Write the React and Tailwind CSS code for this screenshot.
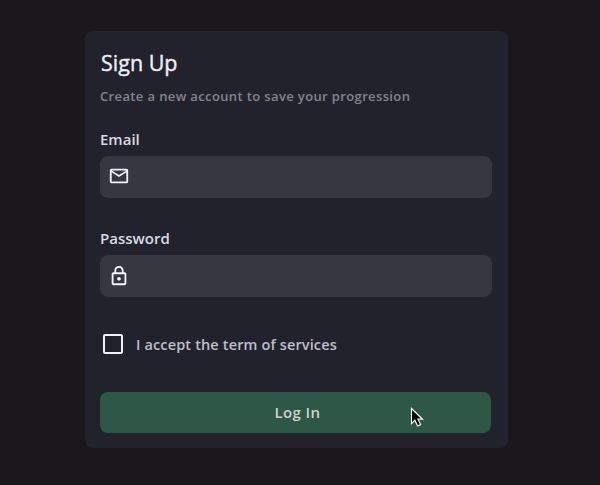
function MailIcon() {
  return (
    <svg className="mb-[2px] h-[22px] w-[22px]" viewBox="0 0 24 24" fill="currentColor">
      <path d="M22 6c0-1.1-.9-2-2-2H4c-1.1 0-2 .9-2 2v12c0 1.1.9 2 2 2h16c1.1 0 2-.9 2-2V6zm-2 0-8 5-8-5h16zm0 12H4V8l8 5 8-5v10z" />
    </svg>
  );
}

function LockIcon() {
  return (
    <svg className="h-[22px] w-[22px]" viewBox="0 0 24 24" fill="currentColor">
      <path d="M12 17c1.1 0 2-.9 2-2s-.9-2-2-2-2 .9-2 2 .9 2 2 2zm6-9h-1V6c0-2.76-2.24-5-5-5S7 3.24 7 6v2H6c-1.1 0-2 .9-2 2v10c0 1.1.9 2 2 2h12c1.1 0 2-.9 2-2V10c0-1.1-.9-2-2-2zM8.9 6c0-1.71 1.39-3.1 3.1-3.1s3.1 1.39 3.1 3.1v2H8.9V6zM18 20H6V10h12v10z" />
    </svg>
  );
}

function Field({ label, icon }) {
  return (
    <div>
      <div className="h-[22px] text-[15px] leading-[22px] font-semibold text-[#dadae1]">{label}</div>
      <div className="mt-[6px] flex h-[42px] items-center rounded-lg bg-[#373741] pl-[8.3px] text-[#f5f5fa]">
        {icon}
      </div>
    </div>
  );
}

export default function App() {
  return (
    <div className="h-[485px] w-[600px] overflow-hidden bg-[#1a181a] pt-[31px] pl-[85px] font-['Open_Sans','Noto_Sans',sans-serif]">
      <main className="relative h-[417px] w-[423px] rounded-lg bg-[#22222d] pr-4 pl-[15px] pt-4">
        <h1 className="h-8 pl-px text-[21.5px] leading-[31px] font-normal whitespace-nowrap text-[#eeeef3] [-webkit-text-stroke:0.4px_currentColor]">
          Sign Up
        </h1>
        <p className="mt-[7px] h-5 text-[13px] leading-5 font-semibold tracking-[0.37px] whitespace-nowrap text-[#84848d]">
          Create a new account to save your progression
        </p>
        <div className="mt-[22px]">
          <Field label="Email" icon={<MailIcon />} />
        </div>
        <div className="mt-[29px]">
          <Field label="Password" icon={<LockIcon />} />
        </div>
        <label className="mt-[37px] flex h-5 items-center pl-[3px]">
          <span className="h-5 w-5 shrink-0 rounded-[2px] border-2 border-[#f0f0f5]" />
          <span className="ml-[13px] pt-[2px] text-[14.5px] leading-5 font-semibold tracking-[0.14px] whitespace-nowrap text-[#bfbfc7]">
            I accept the term of services
          </span>
        </label>
        <button className="mt-[38px] flex h-[41px] w-[391px] items-center justify-center rounded-lg bg-[#2e5745] text-[15px] font-semibold tracking-[0.4px] text-[#cdd2d1]">
          <span className="pl-1">Log In</span>
        </button>
        <svg className="absolute top-[376px] left-[325px] h-[22px] w-[14px]" viewBox="0 0 14 22">
          <path d="M1.5 1.5v15l3.4-3.2 2.7 5.7 3-1.4-2.6-5.4h4.5z" fill="#060606" stroke="#f5f5f5" strokeWidth="1.2" />
        </svg>
      </main>
    </div>
  );
}
